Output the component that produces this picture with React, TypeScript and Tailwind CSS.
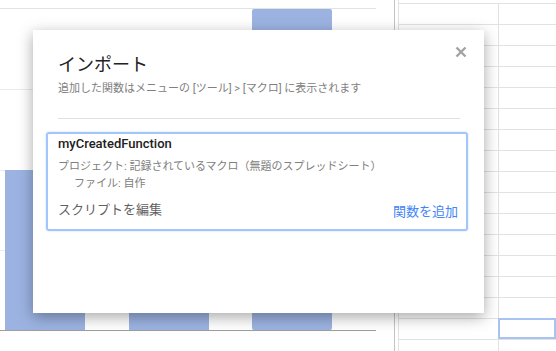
import React from 'react';

const rows = Array.from({ length: 17 });

function Chart() {
  return (
    <svg width="394" height="351" className="block shrink-0">
      <line x1="0" y1="8.5" x2="376" y2="8.5" stroke="#e3e3e3" />
      <line x1="0" y1="89.5" x2="376" y2="89.5" stroke="#ececec" />
      <line x1="0" y1="170.5" x2="376" y2="170.5" stroke="#ececec" />
      <line x1="0" y1="250.5" x2="376" y2="250.5" stroke="#ececec" />
      <rect x="5" y="170" width="80" height="160" fill="#9cb3e2" />
      <rect x="129" y="190" width="80" height="140" fill="#9cb3e2" />
      <rect x="252" y="9" width="80" height="321" fill="#9cb3e2" rx="2" />
      <line x1="0" y1="330.5" x2="376" y2="330.5" stroke="#9e9e9e" />
    </svg>
  );
}

function Sheet() {
  return (
    <div className="flex h-[351px] flex-1">
      <div className="w-px bg-[#c4c4c4]" />
      <div className="w-[3px]" />
      <div className="w-px bg-[#e2e2e2]" />
      <div className="flex flex-1 flex-col pt-[3px]">
        {rows.map((_, i) => (
          <div key={i} className="flex h-[21px] shrink-0 border-t border-[#e2e2e2]">
            <div className="w-[100px] border-r border-[#e2e2e2]" />
            <div
              className={
                i === 15
                  ? 'flex-1 -mt-px -ml-px border-2 border-[#a6c3f3]'
                  : 'flex-1'
              }
            />
          </div>
        ))}
      </div>
    </div>
  );
}

export default function App() {
  return (
    <div className="relative h-[351px] w-[556px] overflow-hidden bg-white font-[Roboto,'Noto_Sans_CJK_JP',sans-serif]">
      <div className="flex">
        <Chart />
        <Sheet />
      </div>

      <div className="absolute left-[33px] top-[30px] h-[283px] w-[451px] bg-white pl-[25px] pr-[24px] pt-[23px] shadow-[0_4px_14px_rgba(0,0,0,0.35)]">
        <button className="absolute left-[422px] top-[16px] flex h-[12px] w-[12px] items-center justify-center">
          <svg width="12" height="12" viewBox="0 0 12 12">
            <path d="M1.5 1.5 L10.5 10.5 M10.5 1.5 L1.5 10.5" stroke="#a3a3a3" strokeWidth="2.4" />
          </svg>
        </button>

        <h1 className="text-[18px] leading-[24px] text-[#212121]">インポート</h1>
        <p className="mt-[4px] text-[11px] leading-[16px] text-[#808080]">
          追加した関数はメニューの [ツール] &gt; [マクロ] に表示されます
        </p>

        <div className="mt-[21px] h-px bg-[#e0e0e0]" />

        <div className="-ml-[12px] -mr-[8px] mt-[13px] rounded-[3px] border-2 border-[#a2c5fb] pl-[10px] pr-[8px] pb-[8px] pt-[1px] shadow-[0_0_2px_#b8d4ff]">
          <div className="text-[13px] font-medium leading-[18px] text-[#212121]">myCreatedFunction</div>
          <div className="mt-[6px] text-[11px] leading-[16px] text-[#808080]">
            プロジェクト: 記録されているマクロ（無題のスプレッドシート）
          </div>
          <div className="mt-px pl-[16px] text-[11px] leading-[16px] text-[#808080]">ファイル: 自作</div>
          <div className="mt-[9px] flex items-start justify-between">
            <span className="text-[13px] leading-[18px] text-[#616161]">スクリプトを編集</span>
            <span className="mt-[2px] text-[13px] leading-[18px] text-[#4285f4]">関数を追加</span>
          </div>
        </div>
      </div>
    </div>
  );
}
